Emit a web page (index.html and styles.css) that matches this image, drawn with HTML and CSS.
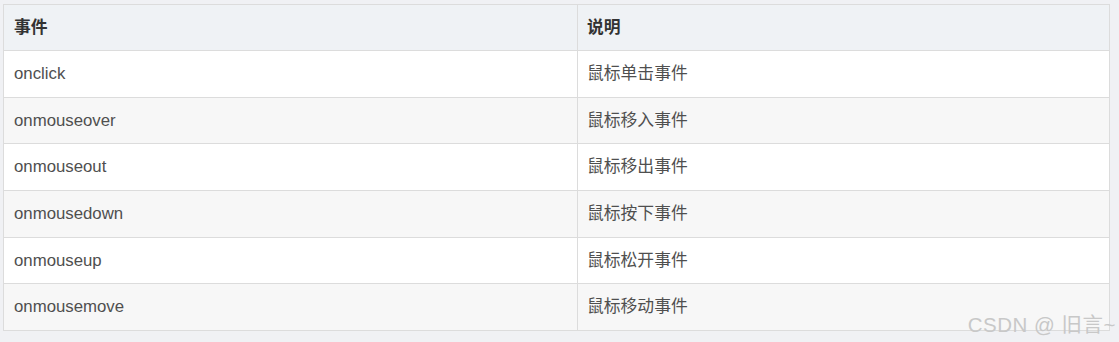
FILE: index.html
```html
<!DOCTYPE html>
<html lang="zh">
<head>
<meta charset="utf-8">
<link rel="stylesheet" href="styles.css">
</head>
<body>
<div class="page">
  <table class="events">
    <thead>
      <tr><th class="c1">事件</th><th>说明</th></tr>
    </thead>
    <tbody>
      <tr><td>onclick</td><td>鼠标单击事件</td></tr>
      <tr><td>onmouseover</td><td>鼠标移入事件</td></tr>
      <tr><td>onmouseout</td><td>鼠标移出事件</td></tr>
      <tr><td>onmousedown</td><td>鼠标按下事件</td></tr>
      <tr><td>onmouseup</td><td>鼠标松开事件</td></tr>
      <tr><td>onmousemove</td><td>鼠标移动事件</td></tr>
    </tbody>
  </table>
  <div class="watermark">CSDN @ 旧言~</div>
</div>
</body>
</html>
```
FILE: styles.css
```css
html, body {
  margin: 0;
  padding: 0;
  background: #f0f1f4;
}
.page {
  position: relative;
  width: 1119px;
  height: 342px;
  padding: 4px 0 0 3px;
  box-sizing: border-box;
}
.events {
  border-collapse: collapse;
  width: 1107px;
  font-family: "Liberation Sans", Arial, "Noto Sans CJK SC", sans-serif;
  font-size: 16.8px;
  color: #4f4f4f;
}
.events th, .events td {
  border: 1px solid #dcdcdc;
  padding: 8px 10px;
  line-height: 29.67px;
  text-align: left;
  vertical-align: middle;
}
.events td + td, .events th + th {
  padding-left: 9px;
}
.events th {
  background: #eff2f5;
  color: #333;
  font-weight: bold;
  line-height: 29px;
}
.events .c1 { width: 553px; }
.events tbody tr { background: #ffffff; }
.events tbody tr:nth-child(2n) { background: #f7f7f7; }
.watermark {
  position: absolute;
  right: 3px;
  bottom: 4px;
  font-family: "Liberation Sans", Arial, "Noto Sans CJK SC", sans-serif;
  font-size: 20.5px;
  color: #c8c8c8;
  letter-spacing: 0.5px;
}
```
